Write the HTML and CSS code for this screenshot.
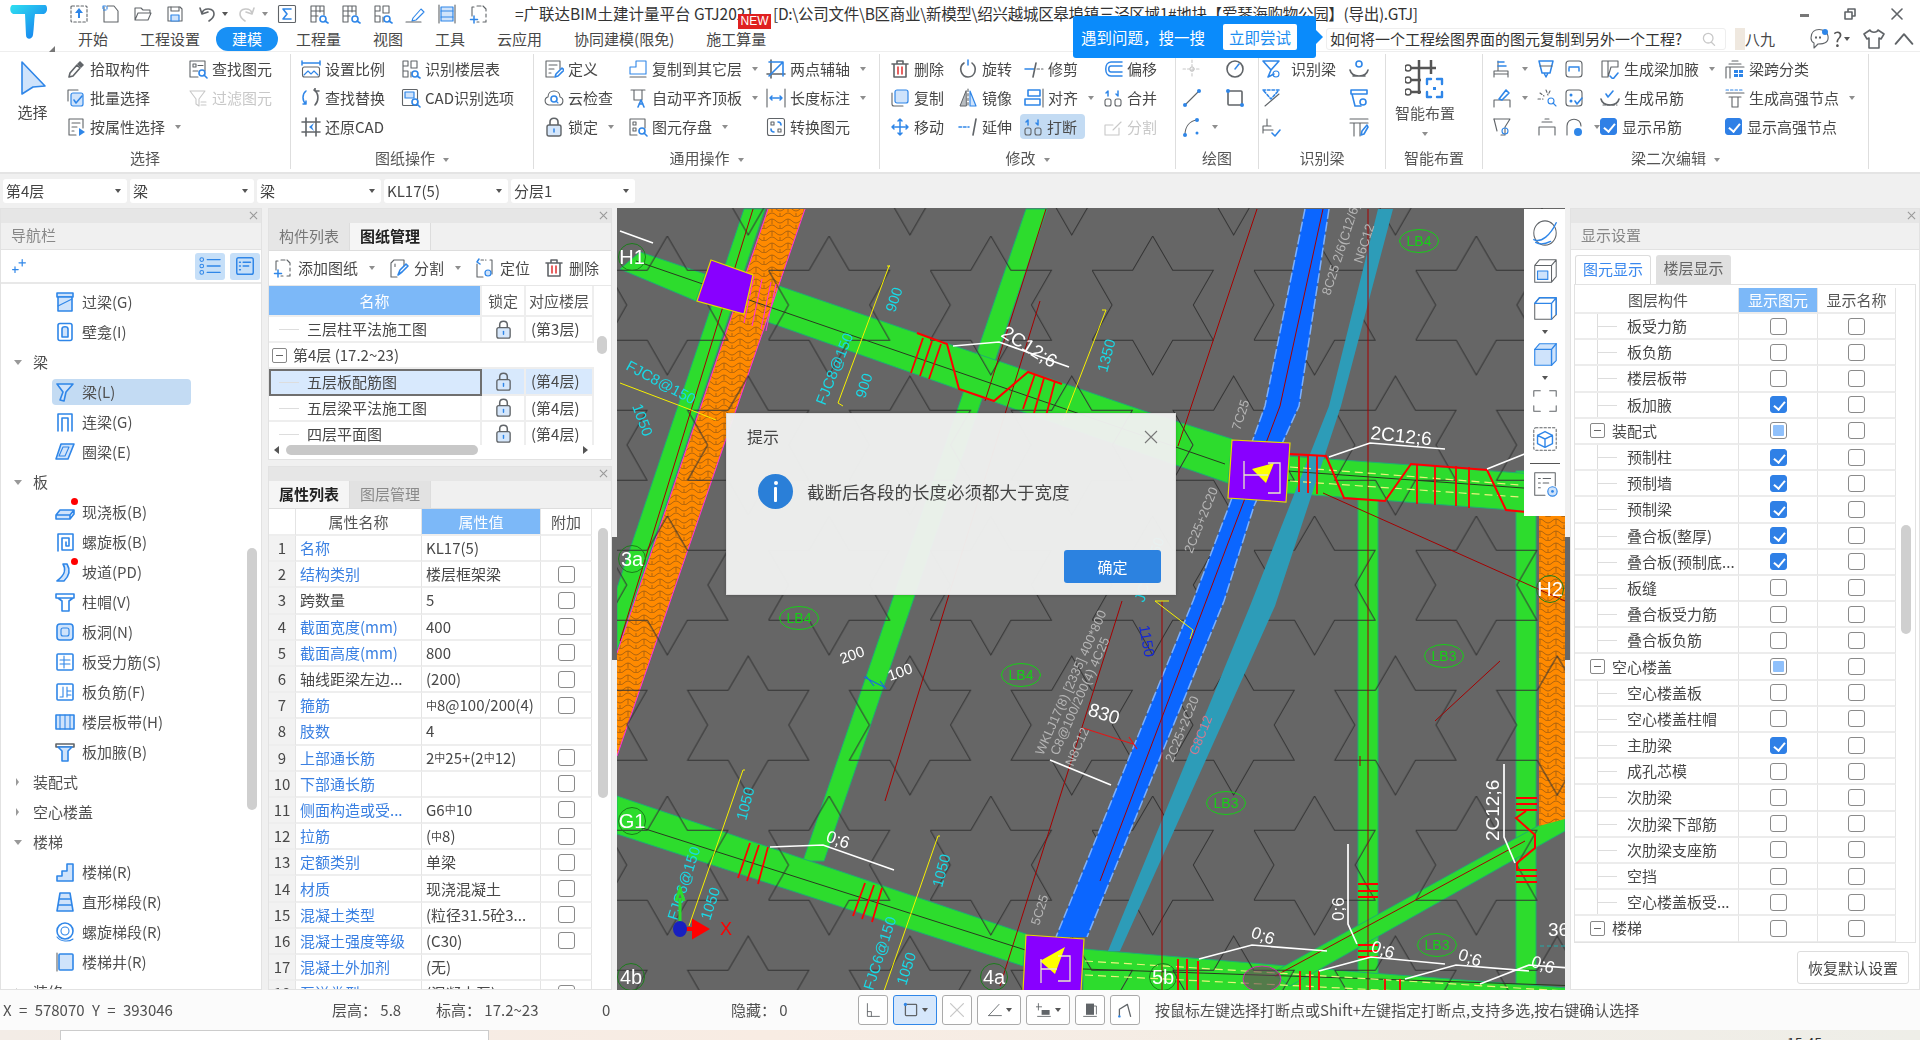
FILE: index.html
```html
<!DOCTYPE html>
<html lang="zh-CN">
<head>
<meta charset="utf-8">
<title>广联达BIM土建计量平台</title>
<link rel="stylesheet" href="styles.css">
</head>
<body>
<svg class="defs" width="0" height="0" aria-hidden="true">
<defs>
<linearGradient id="logoGrad" x1="0" y1="0" x2="1" y2="1"><stop offset="0" stop-color="#2fe0f0"/><stop offset="1" stop-color="#1273f0"/></linearGradient>
<symbol id="i-upload" viewBox="0 0 20 20"><rect class="g dash" x="2" y="2" width="16" height="16" rx="1"/><path class="bf" d="M10 4l4 5h-3v5H9V9H6z"/></symbol>
<symbol id="i-new" viewBox="0 0 20 20"><path class="g" d="M3 3v15h14V7l-4-5H6"/><path class="b dash" d="M2 2h4v4H2z"/></symbol>
<symbol id="i-open" viewBox="0 0 20 20"><path class="g" d="M2 16V4h6l2 2h7v3M2 16l3-7h13l-3 7z"/></symbol>
<symbol id="i-save" viewBox="0 0 20 20"><path class="g" d="M3 3h12l2 2v12H3z"/><path class="g" d="M6 3v4h8V3"/><rect class="lb" x="6" y="11" width="8" height="6"/></symbol>
<symbol id="i-undo" viewBox="0 0 20 20"><path class="g w2" d="M5 9c2-6 12-5 12 1 0 3-2 5-5 7M3 4l2 6 6-2"/></symbol>
<symbol id="i-redo" viewBox="0 0 20 20"><path class="d w2" d="M15 9C13 3 3 4 3 10c0 3 2 5 5 7M17 4l-2 6-6-2"/></symbol>
<symbol id="i-sum" viewBox="0 0 20 20"><rect class="g" x="1.5" y="1.5" width="17" height="17" rx="1"/><path class="b w2" d="M14 5H6l4 5-4 5h8"/></symbol>
<symbol id="i-gridlens" viewBox="0 0 20 20"><path class="g" d="M2 18V2h13v9M2 7h13M2 12h7M7 2v16H2M11 2v6"/><circle class="b w2" cx="14" cy="15" r="3"/><path class="b w2" d="M16 17l3 2"/></symbol>
<symbol id="i-lineslens" viewBox="0 0 20 20"><path class="g" d="M2 18V2h5v5H2M2 12h5v6H2M10 2h6v7h-6zM10 13v5"/><circle class="b w2" cx="14" cy="15" r="3"/><path class="b w2" d="M16 17l3 2"/></symbol>
<symbol id="i-pen" viewBox="0 0 20 20"><path class="b" d="M8 14l8-9 3 3-8 8-4 1z"/><path class="g" d="M1 18h15"/></symbol>
<symbol id="i-cols" viewBox="0 0 20 20"><path class="g" d="M2 1v18M18 1v18"/><rect class="lb" x="4" y="3" width="12" height="14"/><path class="b" d="M4 7h12M4 13h12"/></symbol>
<symbol id="i-addpage" viewBox="0 0 20 20"><path class="g" d="M3 12V3h2M8 2h4M14 2l3 3v2M17 10v3M17 16v2h-3M10 18H8"/><path class="bw" d="M5 12v7M1.500 15.500h7"/></symbol>
<symbol id="i-pick" viewBox="0 0 20 20"><path class="g w2" d="M3 18l1-4 7-8 3 3-7 8z"/><path class="gf" d="M11 5l3-3 4 4-3 3z"/></symbol>
<symbol id="i-batch" viewBox="0 0 20 20"><path class="g" d="M2 13V2h10"/><rect class="lb" x="5" y="5" width="12" height="13" rx="2"/><path class="b w2" d="M8 12l2 3 6-7"/></symbol>
<symbol id="i-attr" viewBox="0 0 20 20"><path class="g" d="M10 18H3V2h14v9M6 6h8M6 10h5M6 14h2"/><path class="bf" d="M13 11l6 4-6 4z"/></symbol>
<symbol id="i-find" viewBox="0 0 20 20"><path class="g" d="M10 18H2V2h15v10"/><rect class="g" x="5" y="5" width="3" height="3"/><path class="g" d="M10 6.500h5M5 12h5"/><circle class="b w2" cx="14" cy="14" r="3"/><path class="b w2" d="M16 16l3 3"/></symbol>
<symbol id="i-filter" viewBox="0 0 20 20"><path class="d" d="M2 3h15l-6 8v7l-3-2v-5z"/><path class="d" d="M13 14h5M13 17h5"/></symbol>
<symbol id="i-scale" viewBox="0 0 20 20"><path class="bw" d="M1 2v4M19 2v4M1 4h18"/><rect class="g" x="1.500" y="8" width="17" height="10" rx="2"/><path class="b" d="M3 16l4-4 3 3 3-3 4 4"/></symbol>
<symbol id="i-replace" viewBox="0 0 20 20"><path class="bw" d="M5 3C1 6 1 13 5 16M5 16v-3M5 16H2"/><path class="g w2" d="M13 2c5 3 5 11 1 15M14 3h4M14 3V0"/></symbol>
<symbol id="i-restore" viewBox="0 0 20 20"><path class="g w2" d="M1 5h18M1 15h18M5 1v18M15 1v18"/><path class="bf" d="M13 6l-5 4 5 4-2-4z"/></symbol>
<symbol id="i-cad" viewBox="0 0 20 20"><rect class="g" x="1.500" y="1.500" width="15" height="16" rx="1"/><rect class="lb" x="4" y="4" width="9" height="6"/><circle class="b w2" cx="14" cy="14" r="3"/><path class="b w2" d="M16 16l3 3"/></symbol>
<symbol id="i-define" viewBox="0 0 20 20"><path class="g" d="M10 18H2V2h14v8M5 6h8M5 10h5M5 14h2"/><path class="b w2" d="M11 18l1-3 6-6 2 2-6 6z"/></symbol>
<symbol id="i-cloud" viewBox="0 0 20 20"><path class="g" d="M5 17C0 16 0 10 4 9c0-8 12-8 12 0 4 1 4 8-1 8z"/><circle class="b w2" cx="10" cy="11" r="3"/><path class="b" d="M12 13l2 2"/></symbol>
<symbol id="i-lock" viewBox="0 0 20 20"><path class="g w2" d="M6 8V5c0-5 8-5 8 0v3"/><rect class="lk" x="3" y="8" width="14" height="11" rx="2"/><path class="bw" d="M10 12v3"/></symbol>
<symbol id="i-copyto" viewBox="0 0 20 20"><path class="b" d="M2 8h6V2h10v13H2z"/><path class="g" d="M2 18h16"/></symbol>
<symbol id="i-autoalign" viewBox="0 0 20 20"><path class="g" d="M3 2h14M6 2v10h8V2"/><path class="b w2" d="M10 19l3-7 3 7M11 16h4"/></symbol>
<symbol id="i-store" viewBox="0 0 20 20"><path class="g" d="M9 18H2V2h15v9"/><rect class="g" x="5" y="5" width="3" height="3"/><rect class="g" x="5" y="11" width="3" height="3"/><circle class="b w2" cx="14" cy="14" r="3"/><path class="b w2" d="M16 16l3 3"/></symbol>
<symbol id="i-axis" viewBox="0 0 20 20"><path class="g w2" d="M5 1v18M1 15h18"/><path class="b w2" d="M3 17L17 3M3 3h14v14"/></symbol>
<symbol id="i-dim" viewBox="0 0 20 20"><path class="g" d="M1 1v18M19 1v18"/><path class="bw" d="M4 10h12M6 8l-2 2 2 2M14 8l2 2-2 2"/></symbol>
<symbol id="i-convert" viewBox="0 0 20 20"><rect class="g" x="1.500" y="1.500" width="17" height="17" rx="2"/><path class="g" d="M5 5h3v3H5zM12 12h3v3h-3z"/><path class="b w2" d="M12 5c3 0 3 3 3 3M8 15c-3 0-3-3-3-3"/></symbol>
<symbol id="i-del" viewBox="0 0 20 20"><path class="g w2" d="M4 5v13h12V5M2 5h16M7 5V2h6v3"/><path class="rw" d="M8 8v7M12 8v7"/></symbol>
<symbol id="i-rotate" viewBox="0 0 20 20"><path class="g w2" d="M6 4C0 8 3 18 10 18s10-9 4-14"/><path class="bw" d="M10 1v5"/></symbol>
<symbol id="i-trim" viewBox="0 0 20 20"><path class="bw" d="M1 10h9"/><path class="g w2" d="M12 4l-3 14"/><path class="g dash" d="M13 10h6"/></symbol>
<symbol id="i-offset" viewBox="0 0 20 20"><path class="bw" d="M19 3H8C1 3 1 17 8 17h11M19 7H8c-3 0-3 6 0 6h11"/></symbol>
<symbol id="i-copy" viewBox="0 0 20 20"><path class="g" d="M2 5v11c0 1 1 2 2 2h9"/><rect class="lb" x="5" y="2" width="13" height="13" rx="2"/></symbol>
<symbol id="i-mirror" viewBox="0 0 20 20"><path class="gf2" d="M8 3L2 18h6z"/><path class="lb" d="M12 3l6 15h-6z"/><path class="g dash" d="M10 1v18"/></symbol>
<symbol id="i-align" viewBox="0 0 20 20"><rect class="b w2" x="4" y="2" width="12" height="6"/><rect class="b w2" x="1" y="11" width="15" height="6"/><path class="g" d="M19 1v18"/></symbol>
<symbol id="i-merge" viewBox="0 0 20 20"><rect class="g" x="2" y="11" width="6" height="7" rx="2"/><rect class="g" x="12" y="11" width="6" height="7" rx="2"/><path class="bw" d="M5 3v5M3 5l2-2M15 3v5M13 6l2 2"/></symbol>
<symbol id="i-move" viewBox="0 0 20 20"><path class="bw" d="M10 2v16M2 10h16M8 4l2-2 2 2M8 16l2 2 2-2M4 8l-2 2 2 2M16 8l2 2-2 2"/></symbol>
<symbol id="i-extend" viewBox="0 0 20 20"><path class="b dash w2" d="M1 10h10"/><path class="g w2" d="M18 2l-3 16"/></symbol>
<symbol id="i-split" viewBox="0 0 20 20"><path class="d" d="M2 8h8M2 8v10h14v-7"/><path class="d" d="M10 13l8-8"/></symbol>
<symbol id="i-point" viewBox="0 0 20 20"><path class="d dash" d="M10 1v18M1 10h18"/><circle class="d" cx="10" cy="10" r="2"/></symbol>
<symbol id="i-clock" viewBox="0 0 20 20"><circle class="g w2" cx="10" cy="10" r="8"/><path class="bw" d="M10 10l4-5"/></symbol>
<symbol id="i-line" viewBox="0 0 20 20"><path class="g" d="M4 16L16 4"/><circle class="bf" cx="3" cy="17" r="2"/><circle class="bf" cx="17" cy="3" r="2"/></symbol>
<symbol id="i-rect" viewBox="0 0 20 20"><rect class="g w2" x="3" y="3" width="14" height="14" rx="1"/><circle class="bf" cx="3" cy="3" r="2"/><circle class="bf" cx="17" cy="17" r="2"/></symbol>
<symbol id="i-arc" viewBox="0 0 20 20"><path class="g" d="M3 18C3 9 8 4 15 3"/><circle class="bf" cx="3" cy="18" r="2"/><circle class="bf" cx="15" cy="3" r="2"/><circle class="bf" cx="15" cy="16" r="1.500"/></symbol>
<symbol id="i-recog" viewBox="0 0 20 20"><path class="b w2" d="M2 2h16l-8 9zM10 11l-3 7 6-3"/><circle class="b" cx="15" cy="15" r="3"/></symbol>
<symbol id="i-recog2" viewBox="0 0 20 20"><path class="b dash w2" d="M2 2h16l-8 9z"/><path class="g" d="M4 18L18 6"/></symbol>
<symbol id="i-recog3" viewBox="0 0 20 20"><path class="g" d="M2 16V9h8M2 13h10M6 2v7"/><path class="b w2" d="M11 16l3 3 5-6"/></symbol>
<symbol id="i-hang" viewBox="0 0 20 20"><circle class="b w2" cx="10" cy="5" r="3"/><path class="g w2" d="M1 11c2 8 16 8 18 0M4 17h12"/></symbol>
<symbol id="i-beamfind" viewBox="0 0 20 20"><path class="b w2" d="M2 2h16v4H2zM3 6l3 12h6"/><circle class="b w2" cx="14" cy="14" r="3"/></symbol>
<symbol id="i-tpen" viewBox="0 0 20 20"><path class="g" d="M1 2h18M1 6h18M5 6v13M11 6v13"/><path class="b w2" d="M12 18l1-4 5-6 1 2-4 7z"/></symbol>
<symbol id="i-beam1" viewBox="0 0 20 20"><path class="g" d="M2 18v-6h14v6M2 15h14M6 12V2"/><path class="bw" d="M6 3h6M6 7h8"/></symbol>
<symbol id="i-beam2" viewBox="0 0 20 20"><path class="bw" d="M2 2h14l-3 12H5zM7 14l2 4 2-4"/><path class="g" d="M3 7h12"/></symbol>
<symbol id="i-beam3" viewBox="0 0 20 20"><rect class="g" x="2" y="2" width="16" height="16" rx="3"/><path class="bw" d="M5 8h10M5 12V9M15 12V9"/></symbol>
<symbol id="i-beam4" viewBox="0 0 20 20"><path class="g" d="M2 19v-7h16v7"/><path class="b w2" d="M7 11l7-9 3 3-7 7z"/></symbol>
<symbol id="i-beam5" viewBox="0 0 20 20"><path class="g dash" d="M9 2l2 5M3 5l4 3M1 11h5M13 3l-2 4"/><circle class="b" cx="14" cy="13" r="3"/><path class="b" d="M16 15l3 3"/></symbol>
<symbol id="i-beam6" viewBox="0 0 20 20"><rect class="g" x="2" y="2" width="16" height="16" rx="3"/><circle class="bf" cx="7" cy="7" r="1.500"/><circle class="bf" cx="7" cy="13" r="1.500"/><path class="b w2" d="M11 13l2 3 5-6"/></symbol>
<symbol id="i-beam7" viewBox="0 0 20 20"><path class="g" d="M2 2h16l-5 8v8H9"/><circle class="b" cx="13" cy="14" r="3"/><path class="g" d="M2 2l3 12"/></symbol>
<symbol id="i-beam8" viewBox="0 0 20 20"><path class="g" d="M2 18v-8h16v8M5 5h10M8 2h4"/></symbol>
<symbol id="i-beam9" viewBox="0 0 20 20"><path class="g" d="M3 18V9c0-9 14-9 14 0"/><circle class="bf" cx="14" cy="15" r="4"/></symbol>
<symbol id="i-haunch" viewBox="0 0 20 20"><path class="g" d="M2 2h16v6H11l-3 10H2zM8 2v16"/><path class="b w2" d="M10 17l3 3 5-6"/></symbol>
<symbol id="i-genhang" viewBox="0 0 20 20"><path class="b w2" d="M6 6l2 3 5-6"/><path class="g w2" d="M1 11c2 8 16 8 18 0"/><path class="g dash" d="M3 17h14"/></symbol>
<symbol id="i-spanclass" viewBox="0 0 20 20"><path class="g" d="M1 19V8h18M4 5h12M7 2h6M5 8v11"/><rect class="bf" x="9" y="11" width="4" height="3"/><rect class="bf" x="14" y="11" width="4" height="3"/><rect class="bf" x="9" y="15" width="4" height="3"/><rect class="bf" x="14" y="15" width="4" height="3"/></symbol>
<symbol id="i-highnode" viewBox="0 0 20 20"><path class="g" d="M1 5h18M4 9h12M7 9v10h6V9"/><path class="b dash" d="M1 2h18"/></symbol>
<symbol id="i-chat" viewBox="0 0 24 24"><path class="g" d="M4 11c0-12 16-10 17-2 1 6-3 8-10 8l-4 4v-5c-2-1-3-3-3-5z"/><circle class="bf" cx="18" cy="5" r="3"/><path class="gf" d="M8 9.500h2v2H8zM12 9.500h2v2h-2z"/></symbol>
<symbol id="i-shirt" viewBox="0 0 24 24"><path class="g w2" d="M8 3L2 7l3 5 2-1v10h10V11l2 1 3-5-6-4c-1 3-7 3-8 0z"/></symbol>
<symbol id="i-lens" viewBox="0 0 20 20"><circle class="d w2" cx="9" cy="9" r="6"/><path class="d w2" d="M13 14l4 4"/></symbol>
<symbol id="i-nlist" viewBox="0 0 24 24"><path class="bw" d="M9 5h14M9 12h14M9 19h14"/><circle class="b" cx="3" cy="5" r="2"/><circle class="b" cx="3" cy="12" r="2"/><circle class="b" cx="3" cy="19" r="2"/></symbol>
<symbol id="i-ncard" viewBox="0 0 24 24"><rect class="b w2" x="3" y="3" width="18" height="18" rx="2"/><path class="b w2" d="M6 8h1M10 8h8M6 12h1M10 12h6M6 16h1"/></symbol>
<symbol id="i-sparkle" viewBox="0 0 20 20"><path class="bw" d="M14 2v8M10 6h8M5 11v7M2 14.500h7"/></symbol>
<symbol id="i-split2" viewBox="0 0 20 20"><path class="g" d="M8 19H2V5l3-3h10v6"/><path class="g dash" d="M6 6v4"/><path class="b w2" d="M9 17l2-5 6-6 2 2-6 6z"/></symbol>
<symbol id="i-locate" viewBox="0 0 20 20"><path class="g" d="M2 6v13h6M15 2h2v14"/><path class="g dash" d="M6 2h5"/><circle class="lb" cx="13" cy="15" r="3"/><path class="bw" d="M4 1l-2 3 3 2"/></symbol>
<symbol id="n-lintel" viewBox="0 0 20 20"><rect class="lbw" x="2" y="1" width="16" height="4"/><path class="lbw" d="M3 5v14h14V5z"/><path class="b" d="M3 14l14-7"/></symbol>
<symbol id="n-niche" viewBox="0 0 20 20"><rect class="b w2" x="3" y="1.500" width="14" height="17" rx="2"/><path class="lbw" d="M7 15V7c0-3 6-3 6 0v8z"/></symbol>
<symbol id="n-beam" viewBox="0 0 20 20"><path class="lbw" d="M2 2h16l-7 8-2 9-4-1 3-8z"/></symbol>
<symbol id="n-link" viewBox="0 0 20 20"><path class="b w2" d="M3 19V2h14v17M7 19V6h6v13"/></symbol>
<symbol id="n-ring" viewBox="0 0 20 20"><path class="lbw" d="M6 2h13l-6 15H1z"/><path class="b" d="M8 5h6l-4 9H4z"/></symbol>
<symbol id="n-slab" viewBox="0 0 20 20"><path class="lbw" d="M1 13l4-5h14l-4 5zM1 13v4h14v-4M19 8v4l-4 5"/></symbol>
<symbol id="n-spiral" viewBox="0 0 20 20"><path class="b w2" d="M3 19V2h15v16H7V6h7v8h-3v-4"/></symbol>
<symbol id="n-ramp" viewBox="0 0 20 20"><path class="lbw" d="M8 2c3 5 3 10-6 17h7c6-6 6-12 3-17z"/></symbol>
<symbol id="n-cap" viewBox="0 0 20 20"><path class="b w2" d="M1 2h18v4H1zM3 6l4 3v10h7V9l4-3"/></symbol>
<symbol id="n-hole" viewBox="0 0 20 20"><rect class="lbw" x="2" y="2" width="16" height="16" rx="3"/><rect class="b" x="6" y="6" width="8" height="8" rx="2"/></symbol>
<symbol id="n-rebar" viewBox="0 0 20 20"><rect class="b w2" x="2" y="2" width="16" height="16" rx="1"/><path class="b" d="M9 4v12M5 8h10M5 12h10"/></symbol>
<symbol id="n-rebar2" viewBox="0 0 20 20"><rect class="b w2" x="2" y="2" width="16" height="16" rx="1"/><path class="b" d="M8 5v10h-3M12 5v10M12 9h4M12 13h4"/></symbol>
<symbol id="n-band" viewBox="0 0 20 20"><rect class="lbw" x="1" y="3" width="18" height="14"/><path class="b" d="M5 3v14M10 3v14M15 3v14"/></symbol>
<symbol id="n-haunch" viewBox="0 0 20 20"><path class="g w2" d="M1 2h18v3H1z"/><path class="lbw" d="M3 5l4 4v10h6V9l4-4z"/></symbol>
<symbol id="n-stair" viewBox="0 0 20 20"><path class="lbw" d="M2 19v-5h5V9h5V2h6v17z"/></symbol>
<symbol id="n-flight" viewBox="0 0 20 20"><path class="lbw" d="M5 1h10l3 18H2zM4 7h12M3 13h14"/></symbol>
<symbol id="n-spstair" viewBox="0 0 20 20"><circle class="b w2" cx="10" cy="9" r="8"/><circle class="b" cx="10" cy="9" r="4"/><path class="b" d="M2 15c4 5 12 5 16 2"/></symbol>
<symbol id="n-well" viewBox="0 0 20 20"><path class="g" d="M2 1v18"/><rect class="lbw" x="4" y="2" width="14" height="16" rx="1"/></symbol>
<pattern id="hatch" patternUnits="userSpaceOnUse" width="16" height="12"><rect class="orange-fill" width="16" height="12"/><path class="hatch-line" d="M0 4q4-4 8 0t8 0M0 10q4-4 8 0t8 0M4 2v5M12 8v4"/></pattern>
<pattern id="stars" patternUnits="userSpaceOnUse" x="606.700" y="235" width="161.800" height="280"><path class="star" d="M60.600 0l20 34.300h40.600l-20 34.700 20 35.300H80.600L60.600 139l-20-34.700H0L20 69 0 34.300h40.600z"/><path class="star" d="M141.500 140l20 34.300h40.600l-20 34.700 20 35.300h-40.600l-20 34.700-20-34.700H80.900l20-35.300-20-34.700h40.600zM-20.300 140l20 34.300H40.300l-20 34.700 20 35.300H-.3l-20 34.700-20-34.700H-81l20-35.300-20-34.700h40.700z"/></pattern>
</defs>
</svg>

<header class="top">
  <div class="logo-cell">
    <svg class="logo" viewBox="0 0 38 36"><path class="logo-t" d="M2 1h33c3 0 3 9-2 9h-8c-1 6-1 14-2 21-1 5-7 5-7 0l-1-21H4C0 10-1 3 2 1z"/></svg>
    <span class="logo-corner"></span>
  </div>
  <div class="top-main">
    <div class="title-row">
      <div class="quick">
        <svg class="ic"><use href="#i-upload"/></svg>
        <svg class="ic"><use href="#i-new"/></svg>
        <svg class="ic"><use href="#i-open"/></svg>
        <svg class="ic"><use href="#i-save"/></svg>
        <span class="quick-pair"><svg class="ic"><use href="#i-undo"/></svg><i class="caret dark"></i></span>
        <span class="quick-pair"><svg class="ic"><use href="#i-redo"/></svg><i class="caret"></i></span>
        <svg class="ic"><use href="#i-sum"/></svg>
        <svg class="ic"><use href="#i-gridlens"/></svg>
        <svg class="ic"><use href="#i-gridlens"/></svg>
        <svg class="ic"><use href="#i-lineslens"/></svg>
        <svg class="ic"><use href="#i-pen"/></svg>
        <svg class="ic"><use href="#i-cols"/></svg>
        <svg class="ic"><use href="#i-addpage"/></svg>
      </div>
      <div class="app-title">=广联达BIM土建计量平台 GTJ2021<span class="new-badge">NEW</span><span class="app-path">[D:\公司文件\B区商业\新模型\绍兴越城区皋埠镇三泾区域1#地块【爱琴海购物公园】(导出).GTJ]</span></div>
      <div class="win-ctrl">
        <span class="win-min"></span>
        <svg class="win-ic" viewBox="0 0 12 12"><path class="g w2" d="M1 4h7v7H1zM4 4V1h7v7H8"/></svg>
        <svg class="win-ic" viewBox="0 0 12 12"><path class="g w2" d="M1 1l10 10M11 1L1 11"/></svg>
      </div>
    </div>
    <div class="tab-row">
      <nav class="tabs">
        <span>开始</span><span>工程设置</span><span class="tab-active">建模</span><span>工程量</span><span>视图</span><span>工具</span><span>云应用</span><span>协同建模(限免)</span><span>施工算量</span>
      </nav>
      <div class="search-zone">
        <div class="search-box"><span>如何将一个工程绘图界面的图元复制到另外一个工程?</span><svg class="ic-s"><use href="#i-lens"/></svg></div>
        <span class="avatar"></span><span class="user">八九</span>
        <svg class="ic-m"><use href="#i-chat"/></svg>
        <span class="help">?<i class="caret dark"></i></span>
        <svg class="ic-m"><use href="#i-shirt"/></svg>
        <svg class="ic-m chevron" viewBox="0 0 20 20"><path class="g w2" d="M3 14l7-8 7 8"/></svg>
      </div>
    </div>
  </div>
  <div class="tip-bubble"><span>遇到问题，搜一搜</span><span class="tip-btn">立即尝试</span></div>
</header>

<section class="ribbon">
  <div class="group g-sel">
    <div class="body">
      <div class="big-btn big-sel"><svg class="ic-big" viewBox="0 0 30 36"><path class="lbw" d="M4 2l23 24-12 1-11 7z"/></svg><span>选择</span></div>
      <div class="col"><div class="item"><svg class="ic"><use href="#i-pick"/></svg>拾取构件</div><div class="item"><svg class="ic"><use href="#i-batch"/></svg>批量选择</div><div class="item"><svg class="ic"><use href="#i-attr"/></svg>按属性选择<i class="caret"></i></div></div>
      <div class="col"><div class="item"><svg class="ic"><use href="#i-find"/></svg>查找图元</div><div class="item off"><svg class="ic"><use href="#i-filter"/></svg>过滤图元</div></div>
    </div>
    <div class="glabel">选择</div>
  </div>
  <div class="group g-dwg">
    <div class="body">
      <div class="col"><div class="item"><svg class="ic"><use href="#i-scale"/></svg>设置比例</div><div class="item"><svg class="ic"><use href="#i-replace"/></svg>查找替换</div><div class="item"><svg class="ic"><use href="#i-restore"/></svg>还原CAD</div></div>
      <div class="col"><div class="item"><svg class="ic"><use href="#i-lineslens"/></svg>识别楼层表</div><div class="item"><svg class="ic"><use href="#i-cad"/></svg>CAD识别选项</div></div>
    </div>
    <div class="glabel">图纸操作<i class="caret"></i></div>
  </div>
  <div class="group g-gen">
    <div class="body">
      <div class="col"><div class="item"><svg class="ic"><use href="#i-define"/></svg>定义</div><div class="item"><svg class="ic"><use href="#i-cloud"/></svg>云检查</div><div class="item"><svg class="ic"><use href="#i-lock"/></svg>锁定<i class="caret"></i></div></div>
      <div class="col"><div class="item"><svg class="ic"><use href="#i-copyto"/></svg>复制到其它层<i class="caret"></i></div><div class="item"><svg class="ic"><use href="#i-autoalign"/></svg>自动平齐顶板<i class="caret"></i></div><div class="item"><svg class="ic"><use href="#i-store"/></svg>图元存盘<i class="caret"></i></div></div>
      <div class="col"><div class="item"><svg class="ic"><use href="#i-axis"/></svg>两点辅轴<i class="caret"></i></div><div class="item"><svg class="ic"><use href="#i-dim"/></svg>长度标注<i class="caret"></i></div><div class="item"><svg class="ic"><use href="#i-convert"/></svg>转换图元</div></div>
    </div>
    <div class="glabel">通用操作<i class="caret"></i></div>
  </div>
  <div class="group g-mod">
    <div class="body">
      <div class="col"><div class="item"><svg class="ic"><use href="#i-del"/></svg>删除</div><div class="item"><svg class="ic"><use href="#i-copy"/></svg>复制</div><div class="item"><svg class="ic"><use href="#i-move"/></svg>移动</div></div>
      <div class="col"><div class="item"><svg class="ic"><use href="#i-rotate"/></svg>旋转</div><div class="item"><svg class="ic"><use href="#i-mirror"/></svg>镜像</div><div class="item"><svg class="ic"><use href="#i-extend"/></svg>延伸</div></div>
      <div class="col"><div class="item"><svg class="ic"><use href="#i-trim"/></svg>修剪</div><div class="item"><svg class="ic"><use href="#i-align"/></svg>对齐<i class="caret"></i></div><div class="item item-on"><svg class="ic"><use href="#i-merge"/></svg>打断</div></div>
      <div class="col"><div class="item"><svg class="ic"><use href="#i-offset"/></svg>偏移</div><div class="item"><svg class="ic"><use href="#i-merge"/></svg>合并</div><div class="item off"><svg class="ic"><use href="#i-split"/></svg>分割</div></div>
    </div>
    <div class="glabel">修改<i class="caret"></i></div>
  </div>
  <div class="group g-draw">
    <div class="body">
      <div class="col"><div class="item"><svg class="ic"><use href="#i-point"/></svg></div><div class="item"><svg class="ic"><use href="#i-line"/></svg></div><div class="item"><svg class="ic"><use href="#i-arc"/></svg><i class="caret"></i></div></div>
      <div class="col"><div class="item"><svg class="ic"><use href="#i-clock"/></svg></div><div class="item"><svg class="ic"><use href="#i-rect"/></svg></div></div>
    </div>
    <div class="glabel">绘图</div>
  </div>
  <div class="group g-rec">
    <div class="body">
      <div class="col"><div class="item"><svg class="ic"><use href="#i-recog"/></svg>识别梁</div><div class="item"><svg class="ic"><use href="#i-recog2"/></svg></div><div class="item"><svg class="ic"><use href="#i-recog3"/></svg></div></div>
      <div class="col"><div class="item"><svg class="ic"><use href="#i-hang"/></svg></div><div class="item"><svg class="ic"><use href="#i-beamfind"/></svg></div><div class="item"><svg class="ic"><use href="#i-tpen"/></svg></div></div>
    </div>
    <div class="glabel">识别梁</div>
  </div>
  <div class="group g-smart">
    <div class="body">
      <div class="big-btn big-smart"><svg class="ic-smart" viewBox="0 0 40 46"><path class="smart-line" d="M14 2v34M26 2v14M1 10h30M1 22h15M1 34h15"/><circle class="smart-dot" cx="3" cy="10" r="3"/><circle class="smart-dot" cx="3" cy="22" r="3"/><circle class="smart-dot" cx="3" cy="34" r="3"/><path class="bw2" d="M22 26v-5h4M32 21h5v5M37 34v5h-5M26 39h-4v-5"/><rect class="bfr" x="28" y="29" width="3" height="3"/></svg><span>智能布置</span><i class="caret"></i></div>
    </div>
    <div class="glabel">智能布置</div>
  </div>
  <div class="group g-edit">
    <div class="body">
      <div class="col"><div class="item"><svg class="ic"><use href="#i-beam1"/></svg><i class="caret"></i></div><div class="item"><svg class="ic"><use href="#i-beam4"/></svg><i class="caret"></i></div><div class="item"><svg class="ic"><use href="#i-beam7"/></svg></div></div>
      <div class="col"><div class="item"><svg class="ic"><use href="#i-beam2"/></svg></div><div class="item"><svg class="ic"><use href="#i-beam5"/></svg></div><div class="item"><svg class="ic"><use href="#i-beam8"/></svg></div></div>
      <div class="col"><div class="item"><svg class="ic"><use href="#i-beam3"/></svg></div><div class="item"><svg class="ic"><use href="#i-beam6"/></svg></div><div class="item"><svg class="ic"><use href="#i-beam9"/></svg><i class="caret"></i></div></div>
      <div class="col"><div class="item"><svg class="ic"><use href="#i-haunch"/></svg>生成梁加腋<i class="caret"></i></div><div class="item"><svg class="ic"><use href="#i-genhang"/></svg>生成吊筋</div><div class="item"><span class="cb on big"></span>显示吊筋</div></div>
      <div class="col"><div class="item"><svg class="ic"><use href="#i-spanclass"/></svg>梁跨分类</div><div class="item"><svg class="ic"><use href="#i-highnode"/></svg>生成高强节点<i class="caret"></i></div><div class="item"><span class="cb on big"></span>显示高强节点</div></div>
    </div>
    <div class="glabel">梁二次编辑<i class="caret"></i></div>
  </div>
</section>

<section class="combos">
  <div class="combo">第4层<i class="caret dark"></i></div>
  <div class="combo">梁<i class="caret dark"></i></div>
  <div class="combo">梁<i class="caret dark"></i></div>
  <div class="combo">KL17(5)<i class="caret dark"></i></div>
  <div class="combo">分层1<i class="caret dark"></i></div>
</section>

<main class="workspace">
  <aside class="panel nav">
    <div class="closebar"><svg class="x" viewBox="0 0 10 10"><path d="M1 1l8 8M9 1l-8 8"/></svg></div>
    <div class="ptitle">导航栏</div>
    <div class="nav-tools">
      <svg class="ic-s spark"><use href="#i-sparkle"/></svg>
      <span class="nav-toggle"><svg class="ic-t"><use href="#i-nlist"/></svg></span>
      <span class="nav-toggle"><svg class="ic-t"><use href="#i-ncard"/></svg></span>
    </div>
    <div class="tree">
      <div class="node"><svg class="ic"><use href="#n-lintel"/></svg>过梁(G)</div>
      <div class="node"><svg class="ic"><use href="#n-niche"/></svg>壁龛(I)</div>
      <div class="folder"><i class="tri open"></i>梁</div>
      <div class="node sel"><svg class="ic"><use href="#n-beam"/></svg>梁(L)</div>
      <div class="node"><svg class="ic"><use href="#n-link"/></svg>连梁(G)</div>
      <div class="node"><svg class="ic"><use href="#n-ring"/></svg>圈梁(E)</div>
      <div class="folder"><i class="tri open"></i>板</div>
      <div class="node dot"><svg class="ic"><use href="#n-slab"/></svg>现浇板(B)</div>
      <div class="node"><svg class="ic"><use href="#n-spiral"/></svg>螺旋板(B)</div>
      <div class="node dot"><svg class="ic"><use href="#n-ramp"/></svg>坡道(PD)</div>
      <div class="node"><svg class="ic"><use href="#n-cap"/></svg>柱帽(V)</div>
      <div class="node"><svg class="ic"><use href="#n-hole"/></svg>板洞(N)</div>
      <div class="node"><svg class="ic"><use href="#n-rebar"/></svg>板受力筋(S)</div>
      <div class="node"><svg class="ic"><use href="#n-rebar2"/></svg>板负筋(F)</div>
      <div class="node"><svg class="ic"><use href="#n-band"/></svg>楼层板带(H)</div>
      <div class="node"><svg class="ic"><use href="#n-haunch"/></svg>板加腋(B)</div>
      <div class="folder"><i class="tri"></i>装配式</div>
      <div class="folder"><i class="tri"></i>空心楼盖</div>
      <div class="folder"><i class="tri open"></i>楼梯</div>
      <div class="node"><svg class="ic"><use href="#n-stair"/></svg>楼梯(R)</div>
      <div class="node"><svg class="ic"><use href="#n-flight"/></svg>直形梯段(R)</div>
      <div class="node"><svg class="ic"><use href="#n-spstair"/></svg>螺旋梯段(R)</div>
      <div class="node"><svg class="ic"><use href="#n-well"/></svg>楼梯井(R)</div>
      <div class="folder"><i class="tri"></i>装修</div>
      <span class="vbar nav-bar"></span>
    </div>
  </aside>

  <div class="mid">
    <section class="panel sheets">
      <div class="closebar"><svg class="x" viewBox="0 0 10 10"><path d="M1 1l8 8M9 1l-8 8"/></svg></div>
      <div class="ptabs"><span class="ptab dim">构件列表</span><span class="ptab cur">图纸管理</span></div>
      <div class="sheet-tools">
        <span><svg class="ic"><use href="#i-addpage"/></svg>添加图纸<i class="caret"></i></span>
        <span><svg class="ic"><use href="#i-split2"/></svg>分割<i class="caret"></i></span>
        <span><svg class="ic"><use href="#i-locate"/></svg>定位</span>
        <span><svg class="ic"><use href="#i-del"/></svg>删除</span>
      </div>
      <div class="sheet-grid">
        <div class="sh head hl">名称</div><div class="sh head">锁定</div><div class="sh head">对应楼层</div>
        <div class="sh name tl">三层柱平法施工图</div><div class="sh ctr"><svg class="ic-lock"><use href="#i-lock"/></svg></div><div class="sh">(第3层)</div>
        <div class="sh group-row"><span class="minus"></span>第4层 (17.2~23)</div>
        <div class="sh name tl focus">五层板配筋图</div><div class="sh ctr pick"><svg class="ic-lock"><use href="#i-lock"/></svg></div><div class="sh pick">(第4层)</div>
        <div class="sh name tl">五层梁平法施工图</div><div class="sh ctr"><svg class="ic-lock"><use href="#i-lock"/></svg></div><div class="sh">(第4层)</div>
        <div class="sh name tl">四层平面图</div><div class="sh ctr"><svg class="ic-lock"><use href="#i-lock"/></svg></div><div class="sh">(第4层)</div>
      </div>
      <span class="vbar sheet-v"></span>
      <div class="hscroll"><i class="arrow-l"></i><span class="hthumb"></span><i class="arrow-r"></i></div>
    </section>

    <section class="panel props">
      <div class="closebar"><svg class="x" viewBox="0 0 10 10"><path d="M1 1l8 8M9 1l-8 8"/></svg></div>
      <div class="ptabs"><span class="ptab cur">属性列表</span><span class="ptab dim2">图层管理</span></div>
      <div class="prop-grid">
        <div class="pc phead"></div><div class="pc phead cc">属性名称</div><div class="pc phead cc hl">属性值</div><div class="pc phead cc">附加</div>
        <div class="pc num">1</div><div class="pc lnk">名称</div><div class="pc">KL17(5)</div><div class="pc"></div>
        <div class="pc num">2</div><div class="pc lnk">结构类别</div><div class="pc">楼层框架梁</div><div class="pc cc"><span class="cb"></span></div>
        <div class="pc num">3</div><div class="pc">跨数量</div><div class="pc">5</div><div class="pc cc"><span class="cb"></span></div>
        <div class="pc num">4</div><div class="pc lnk">截面宽度(mm)</div><div class="pc">400</div><div class="pc cc"><span class="cb"></span></div>
        <div class="pc num">5</div><div class="pc lnk">截面高度(mm)</div><div class="pc">800</div><div class="pc cc"><span class="cb"></span></div>
        <div class="pc num">6</div><div class="pc">轴线距梁左边...</div><div class="pc">(200)</div><div class="pc cc"><span class="cb"></span></div>
        <div class="pc num">7</div><div class="pc lnk">箍筋</div><div class="pc clipv"><sup class="steel">中</sup>8@100/200(4)</div><div class="pc cc"><span class="cb"></span></div>
        <div class="pc num">8</div><div class="pc lnk">肢数</div><div class="pc">4</div><div class="pc"></div>
        <div class="pc num">9</div><div class="pc lnk">上部通长筋</div><div class="pc">2<sup class="steel">中</sup>25+(2<sup class="steel">中</sup>12)</div><div class="pc cc"><span class="cb"></span></div>
        <div class="pc num">10</div><div class="pc lnk">下部通长筋</div><div class="pc"></div><div class="pc cc"><span class="cb"></span></div>
        <div class="pc num">11</div><div class="pc lnk">侧面构造或受...</div><div class="pc">G6<sup class="steel">中</sup>10</div><div class="pc cc"><span class="cb"></span></div>
        <div class="pc num">12</div><div class="pc lnk">拉筋</div><div class="pc">(<sup class="steel">中</sup>8)</div><div class="pc cc"><span class="cb"></span></div>
        <div class="pc num">13</div><div class="pc lnk">定额类别</div><div class="pc">单梁</div><div class="pc cc"><span class="cb"></span></div>
        <div class="pc num">14</div><div class="pc lnk">材质</div><div class="pc">现浇混凝土</div><div class="pc cc"><span class="cb"></span></div>
        <div class="pc num">15</div><div class="pc lnk">混凝土类型</div><div class="pc">(粒径31.5砼3...</div><div class="pc cc"><span class="cb"></span></div>
        <div class="pc num">16</div><div class="pc lnk">混凝土强度等级</div><div class="pc">(C30)</div><div class="pc cc"><span class="cb"></span></div>
        <div class="pc num">17</div><div class="pc lnk">混凝土外加剂</div><div class="pc">(无)</div><div class="pc"></div>
        <div class="pc num">18</div><div class="pc lnk">泵送类型</div><div class="pc">(混凝土泵)</div><div class="pc cc"><span class="cb"></span></div>
      </div>
      <span class="vbar prop-v"></span>
    </section>
  </div>

  <div class="gutter"><span></span></div>

  <div class="canvas">
    <svg class="cad" viewBox="617 207 948 783" preserveAspectRatio="none" width="948" height="783">
      <rect class="cad-bg" x="617" y="207" width="948" height="783"/>
      <!-- green members, page coordinates -->
      <polygon class="gr" points="744,208 765,208 617,650 617,587"/>
      <polygon class="gr" points="1026,208 1047,208 824,860 803,860"/>
      <polygon class="gr" points="1358,490 1378,490 1378,985 1358,985"/>
      <polygon class="gr" points="1516,470 1536,470 1536,990 1516,990"/>
      <polygon class="gr" points="640,251 705,273 696,300 620,268"/>
      <polygon class="gr" points="750,275 1150,412 1232,438 1228,482 1020,410 745,313"/>
      <polygon class="gr" points="1287,455 1520,472 1565,476 1565,515 1525,510 1287,492"/>
      <polygon class="gr" points="617,795 1026,933 1023,965 617,833"/>
      <polygon class="gr" points="1083,948 1371,972 1580,988 1580,990 1083,990"/>
      <polygon class="gr" points="1272,972 1565,810 1565,830 1290,985"/>
      <!-- orange bands -->
      <polygon class="or" points="768,208 805,208 617,755 617,652"/>
      <polygon class="or" points="1539,515 1565,515 1565,818 1539,825"/>
      <path class="mg" d="M768 208L617 652M805 208L617 755"/>
      <!-- star pattern -->
      <rect class="star-fill" x="617" y="207" width="948" height="783"/>
      <!-- teal & blue -->
      <polygon class="teal" points="1378,208 1393,208 1341,405 1275,605 1120,950 1108,950 1250,605 1329,405"/>
      <polygon class="blue" points="1305,208 1329,208 1299,405 1254,505 1224,600 1087,936 1056,936 1193,600 1229,505 1265,405"/>
      <path class="blue-edge" d="M1305 208L1265 405 1229 505 1193 600 1056 936M1329 208L1299 405 1254 505 1224 600 1087 936"/>
      <!-- thin dark red lines -->
      <path class="dr" d="M1257 208L1178 445M1368 208V990M1122 600L1000 985M1162 600V990M1323 208L1280 405 1100 880"/>
      <path class="dr" d="M1323 492L1565 600M1040 300L885 800M1046 208L985 400M753 208L620 640"/>
      <path class="dk" d="M636 260L1225 463M1287 470L1565 490M636 825L1060 960M1083 968L1580 985"/>
      <path class="dr" d="M1360 755V765M1500 660l-65 60M1525 840l-250 135"/>
      <path class="ye-dash" d="M1290 466L1520 484M1290 480L1520 496M1085 960L1565 990M1085 974L1400 990"/>
      <!-- yellow lines -->
      <path class="ye" d="M887 265h3l-1 0L838 402l5 3M1102 309h4L1063 420M620 382l66 25 30 12M1169 600l-14 0 38 29-3 9"/>
      <path class="ye" d="M745 769h-2L689 925M940 835h-2L884 990"/>
      <!-- purple columns -->
      <polygon class="pu" points="711,259 753,274 744,313 697,300"/>
      <polygon class="pu" points="1232,439 1290,442 1286,501 1228,497"/>
      <polygon class="pu" points="1026,934 1084,938 1081,990 1023,990"/>
      <path class="ye-fill" d="M1252 468l22-6-8 20zM1040 960l25-14-10 27z"/>
      <path class="cw" d="M1244 460v28M1244 474h24M1268 462h12v30h-12M1041 958v24M1041 968h16M1058 955h12v25h-12"/>
      <!-- magenta ties next to column -->
      <path class="mg" d="M754 275l-10 47M762 278l-10 47M771 281l-10 47M776 283l-10 47"/>
      <!-- rebars -->
      <path class="rd" d="M917 332l30 11 12 45 35 12 34-29 34 12"/>
      <path class="rd2" d="M923 337l-12 35M932 340l-12 35M941 343l-12 35M1035 373l-12 35M1044 377l-10 35M1055 380l-9 35"/>
      <path class="rd" d="M1290 453l36 2 18 42 41 3 26-37 76 6 19 40 20 2"/>
      <path class="rd2" d="M1299 455v36M1308 455v37M1317 455v38M1417 463v40M1435 464v40M1456 465v40M1469 466v41"/>
      <path class="rd2" d="M750 842l-12 35M759 844l-12 36M768 846l-10 37M865 882l-12 33M874 884l-12 34M882 887l-10 34"/>
      <path class="rd2" d="M1358 883h20M1358 890h20M1358 896h20M1358 944h20M1358 950h20M1358 956h20"/>
      <path class="rd2" d="M1516 797h21M1516 803h21M1516 809h21M1516 869h21M1516 875h21M1516 881h21"/>
      <path class="rd" d="M1526 810l-10 7 19 17v13l-18 15v7"/>
      <path class="rd2" d="M1178 958v32M1187 958v32M1198 960v30M1300 970v20M1310 970v20M1319 970v20M1385 978v12M1400 978v12"/>
      <!-- dim lines -->
      <path class="rdthin" d="M1083 727l50 16M1129 736l8 12"/>
      <path class="blue-thin" d="M866 675l8 10M880 680l6 8M864 676l20 10"/>
      <path class="cy-dash" d="M1540 945h25"/>
      <!-- white leaders -->
      <path class="wh" d="M620 230l33 12M953 345l46-4 70 25M1329 456l41-14 75 6M1487 468l40-16M770 846l53-2 71 25M1050 759l61 25M1199 958l53-14 75 6M1319 970l52-14 74 7M1405 978l51-14 73 6M1480 983l49-19 40 3M1348 843v80l9 20M1504 763v73l11 26"/>
      <!-- axis circles -->
      <circle class="ax" cx="632" cy="256" r="13.500"/><circle class="ax" cx="632" cy="558" r="13.500"/><circle class="ax" cx="632" cy="820" r="13.500"/><circle class="ax" cx="631" cy="976" r="13.500"/><circle class="ax" cx="994" cy="976" r="13.500"/><circle class="ax" cx="1163" cy="976" r="13.500"/><circle class="ax" cx="1550" cy="588" r="13.500"/>
      <ellipse class="lbc" cx="1419" cy="240" rx="19.500" ry="11.500"/><ellipse class="lbc" cx="799" cy="617" rx="19.500" ry="11.500"/><ellipse class="lbc" cx="1021" cy="674" rx="19.500" ry="11.500"/><ellipse class="lbc" cx="1226" cy="802" rx="19.500" ry="11.500"/><ellipse class="lbc" cx="1444" cy="655" rx="19.500" ry="11.500"/><ellipse class="lbc" cx="1437" cy="944" rx="19.500" ry="11.500"/>
      <ellipse class="mgc" cx="1262" cy="978" rx="19" ry="13"/>
      <!-- labels -->
      <text class="t-ax" x="632" y="263">H1</text><text class="t-ax" x="632" y="565">3a</text><text class="t-ax" x="632" y="827">G1</text><text class="t-ax" x="631" y="983">4b</text><text class="t-ax" x="994" y="983">4a</text><text class="t-ax" x="1163" y="983">5b</text><text class="t-ax" x="1550" y="595">H2</text>
      <text class="t-lb" x="1419" y="245">LB4</text><text class="t-lb" x="799" y="622">LB4</text><text class="t-lb" x="1021" y="679">LB4</text><text class="t-lb" x="1226" y="807">LB3</text><text class="t-lb" x="1444" y="660">LB3</text><text class="t-lb" x="1437" y="949">LB3</text>
      <g class="t-cy">
        <text transform="translate(895 312) rotate(-72)">900</text>
        <text transform="translate(865 398) rotate(-72)">900</text>
        <text transform="translate(1107 372) rotate(-75)">1350</text>
        <text transform="translate(625 368) rotate(28)">FJC8@150</text>
        <text transform="translate(632 405) rotate(70)">1050</text>
        <text transform="translate(825 405) rotate(-68)">FJC8@150</text>
        <text transform="translate(746 820) rotate(-75)">1050</text>
        <text transform="translate(677 920) rotate(-72)">FJC6@150</text>
        <text transform="translate(710 920) rotate(-72)">1050</text>
        <text transform="translate(942 887) rotate(-75)">1050</text>
        <text transform="translate(873 990) rotate(-72)">FJC6@150</text>
        <text transform="translate(906 985) rotate(-72)">1050</text>
        <text transform="translate(1144 602) rotate(-72)">JC6@150</text>
      </g>
      <text class="t-blue" transform="translate(1139 625) rotate(80)">1150</text>
      <g class="t-gr">
        <text transform="translate(1330 295) rotate(-72)">8C25 2/6(C12/6)</text>
        <text transform="translate(1362 263) rotate(-72)">N6C12</text>
        <text transform="translate(1240 430) rotate(-72)">7C25</text>
        <text transform="translate(1192 553) rotate(-68)">2C25+2C20</text>
        <text transform="translate(1043 755) rotate(-66)">WKLJ17(8) [2335] 400*800</text>
        <text transform="translate(1058 755) rotate(-66)">C8@100/200(4) 4C25</text>
        <text transform="translate(1073 766) rotate(-66)">N8C12</text>
        <text transform="translate(1173 762) rotate(-68)">2C25+2C20</text>
        <text transform="translate(1039 925) rotate(-72)">5C25</text>
      </g>
      <text class="t-gr t-rose" transform="translate(1197 755) rotate(-68)">G8C12</text>
      <g class="t-wh">
        <text transform="translate(1000 335) rotate(32)">2C12;6</text>
        <text transform="translate(1370 438) rotate(6)">2C12;6</text>
        <text class="t-sm" transform="translate(842 663) rotate(-20)">200</text>
        <text class="t-sm" transform="translate(890 680) rotate(-20)">100</text>
        <text transform="translate(1087 714) rotate(18)">830</text>
        <text class="t-md" transform="translate(825 840) rotate(20)">0;6</text>
        <text class="t-md" transform="translate(1250 936) rotate(20)">0;6</text>
        <text class="t-md" transform="translate(1370 950) rotate(20)">0;6</text>
        <text class="t-md" transform="translate(1457 958) rotate(20)">0;6</text>
        <text class="t-md" transform="translate(1530 965) rotate(20)">0;6</text>
        <text class="t-md" transform="translate(1344 920) rotate(-90)">0;6</text>
        <text transform="translate(1499 840) rotate(-90)">2C12;6</text>
        <text x="1548" y="935">36</text>
      </g>
      <!-- UCS -->
      <path class="ucs-g" d="M680 925v-28M676 900l4-12 4 12"/>
      <path class="ucs-r" d="M680 928h18M694 921l12 7-12 7z"/>
      <ellipse class="ucs-b" cx="680" cy="928" rx="7" ry="8"/>
      <text class="t-x" x="720" y="934">X</text>
    </svg>

    <div class="side-tools">
      <svg class="st" viewBox="0 0 30 30"><ellipse class="g" cx="15" cy="15" rx="12" ry="13"/><path class="bw" d="M3 22c8 4 18-5 24-18M5 25c5 3 10 2 16-1"/></svg>
      <svg class="st" viewBox="0 0 30 30"><path class="g" d="M4 9l5-6h18v18l-5 6H4zM4 9h18v18M22 9l5-6"/><rect class="lb" x="7" y="15" width="11" height="9"/></svg>
      <svg class="st" viewBox="0 0 30 30"><path class="g" d="M4 9v17h18l5-5V3H9z"/><path class="bw" d="M4 9l5-6h18l-5 6H4M22 9v17M22 9l5-6v18"/></svg>
      <i class="caret dark side-caret"></i>
      <svg class="st" viewBox="0 0 30 30"><path class="lb w2" d="M4 9v17h18l5-5V3H9z"/><path class="bw" d="M4 9h18v17M22 9l5-6"/></svg>
      <i class="caret dark side-caret"></i>
      <svg class="st" viewBox="0 0 30 30"><path class="g" d="M3 10V4h7M20 4h7v6M27 20v6h-7M10 26H3v-6"/></svg>
      <svg class="st" viewBox="0 0 30 30"><rect class="g dash" x="3" y="3" width="24" height="24" rx="2"/><path class="bw" d="M15 7l8 4v9l-8 4-8-4v-9zM7 11l8 4 8-4M15 15v9"/></svg>
      <span class="side-sep"></span>
      <svg class="st" viewBox="0 0 30 30"><path class="g" d="M15 27H4V3h22v14M8 9h2M13 9h8M8 14h2M13 14h6M8 19h2"/><circle class="lb" cx="23" cy="23" r="5"/><circle class="bf" cx="23" cy="23" r="1.500"/></svg>
    </div>

    <div class="dialog">
      <div class="dlg-head"><span>提示</span><svg class="dlg-x" viewBox="0 0 14 14"><path d="M1 1l12 12M13 1L1 13"/></svg></div>
      <div class="dlg-body"><span class="info"><i></i></span><span>截断后各段的长度必须都大于宽度</span></div>
      <div class="dlg-foot"><span class="dlg-btn">确定</span></div>
    </div>
  </div>

  <div class="gutter"><span></span></div>

  <aside class="panel display">
    <div class="closebar"><svg class="x" viewBox="0 0 10 10"><path d="M1 1l8 8M9 1l-8 8"/></svg></div>
    <div class="ptitle">显示设置</div>
    <div class="disp-tabs"><span class="dt on">图元显示</span><span class="dt">楼层显示</span></div>
    <div class="disp-table">
      <div class="disp-grid">
        <div class="dc dh dname">图层构件</div><div class="dc dh hl">显示图元</div><div class="dc dh">显示名称</div>
        <div class="dc dn">板受力筋</div><div class="dc"><span class="cb"></span></div><div class="dc"><span class="cb"></span></div>
        <div class="dc dn">板负筋</div><div class="dc"><span class="cb"></span></div><div class="dc"><span class="cb"></span></div>
        <div class="dc dn">楼层板带</div><div class="dc"><span class="cb"></span></div><div class="dc"><span class="cb"></span></div>
        <div class="dc dn">板加腋</div><div class="dc"><span class="cb on"></span></div><div class="dc"><span class="cb"></span></div>
        <div class="dc dg"><span class="minus"></span>装配式</div><div class="dc"><span class="cb part"></span></div><div class="dc"><span class="cb"></span></div>
        <div class="dc dn">预制柱</div><div class="dc"><span class="cb on"></span></div><div class="dc"><span class="cb"></span></div>
        <div class="dc dn">预制墙</div><div class="dc"><span class="cb on"></span></div><div class="dc"><span class="cb"></span></div>
        <div class="dc dn">预制梁</div><div class="dc"><span class="cb on"></span></div><div class="dc"><span class="cb"></span></div>
        <div class="dc dn">叠合板(整厚)</div><div class="dc"><span class="cb on"></span></div><div class="dc"><span class="cb"></span></div>
        <div class="dc dn">叠合板(预制底...</div><div class="dc"><span class="cb on"></span></div><div class="dc"><span class="cb"></span></div>
        <div class="dc dn">板缝</div><div class="dc"><span class="cb"></span></div><div class="dc"><span class="cb"></span></div>
        <div class="dc dn">叠合板受力筋</div><div class="dc"><span class="cb"></span></div><div class="dc"><span class="cb"></span></div>
        <div class="dc dn">叠合板负筋</div><div class="dc"><span class="cb"></span></div><div class="dc"><span class="cb"></span></div>
        <div class="dc dg"><span class="minus"></span>空心楼盖</div><div class="dc"><span class="cb part"></span></div><div class="dc"><span class="cb"></span></div>
        <div class="dc dn">空心楼盖板</div><div class="dc"><span class="cb"></span></div><div class="dc"><span class="cb"></span></div>
        <div class="dc dn">空心楼盖柱帽</div><div class="dc"><span class="cb"></span></div><div class="dc"><span class="cb"></span></div>
        <div class="dc dn">主肋梁</div><div class="dc"><span class="cb on"></span></div><div class="dc"><span class="cb"></span></div>
        <div class="dc dn">成孔芯模</div><div class="dc"><span class="cb"></span></div><div class="dc"><span class="cb"></span></div>
        <div class="dc dn">次肋梁</div><div class="dc"><span class="cb"></span></div><div class="dc"><span class="cb"></span></div>
        <div class="dc dn">次肋梁下部筋</div><div class="dc"><span class="cb"></span></div><div class="dc"><span class="cb"></span></div>
        <div class="dc dn">次肋梁支座筋</div><div class="dc"><span class="cb"></span></div><div class="dc"><span class="cb"></span></div>
        <div class="dc dn">空挡</div><div class="dc"><span class="cb"></span></div><div class="dc"><span class="cb"></span></div>
        <div class="dc dn">空心楼盖板受...</div><div class="dc"><span class="cb"></span></div><div class="dc"><span class="cb"></span></div>
        <div class="dc dg"><span class="minus"></span>楼梯</div><div class="dc"><span class="cb"></span></div><div class="dc"><span class="cb"></span></div>
      </div>
      <span class="vbar disp-v"></span>
    </div>
    <div class="disp-foot"><span class="reset">恢复默认设置</span></div>
  </aside>
</main>

<footer class="status">
  <span class="st-coord">X = 578070 Y = 393046</span>
  <span class="st-h">层高：&nbsp;5.8</span>
  <span class="st-e">标高：&nbsp;17.2~23</span>
  <span class="st-z">0</span>
  <span class="st-hide">隐藏：&nbsp;0</span>
  <div class="snap">
    <span class="sb"><svg class="ic-s" viewBox="0 0 20 20"><path class="g" d="M3 2v16h15M8 18v-6h-5"/></svg></span>
    <span class="sb wide on"><svg class="ic-s" viewBox="0 0 20 20"><rect class="g w2" x="3" y="3" width="14" height="14" rx="1"/><circle class="bf" cx="3" cy="3" r="2"/></svg><i class="caret dark"></i></span>
    <span class="sb"><svg class="ic-s" viewBox="0 0 20 20"><path class="d w2" d="M2 2l16 16M18 2L2 18"/></svg></span>
    <span class="sb wide"><svg class="ic-s" viewBox="0 0 20 20"><path class="g" d="M2 17L15 3M2 17h16"/></svg><i class="caret dark"></i></span>
    <span class="sb wide"><svg class="ic-s" viewBox="0 0 20 20"><path class="g" d="M3 2v8M0 6h7"/><rect class="gf" x="7" y="10" width="10" height="6"/><path class="g" d="M2 18h16"/></svg><i class="caret dark"></i></span>
    <span class="sb"><svg class="ic-s" viewBox="0 0 20 20"><rect class="gf" x="5" y="2" width="10" height="14"/><path class="g" d="M2 18h16M15 5h3v10"/></svg></span>
    <span class="sb"><svg class="ic-s" viewBox="0 0 20 20"><path class="g w2" d="M3 18V9l10-6 4 15"/><circle class="bf" cx="3" cy="18" r="1.500"/></svg></span>
  </div>
  <span class="st-msg">按鼠标左键选择打断点或Shift+左键指定打断点,支持多选,按右键确认选择</span>
</footer>
<div class="taskstrip"><span class="strip-box"></span><span class="strip-clock">15:45</span></div>
</body>
</html>
```
FILE: styles.css
```css
* { box-sizing: border-box; }
html, body { margin: 0; height: 1040px; overflow: hidden; }
body { width: 1920px; background: #f0f0f0; font: 15px/1.2 "Noto Sans CJK SC", "Noto Sans", sans-serif; color: #484848; }
.defs { position: absolute; }
.top, .ribbon, .combos, .workspace, .status { filter: blur(.35px); }

/* icon stroke classes */
.g, .b, .d, .bw, .rw, .lb, .lk, .lbw, .gf2, .bw2 { fill: none; stroke-linecap: round; stroke-linejoin: round; }
.g { stroke: #606468; stroke-width: 1.1; }
.b { stroke: #2f86e8; stroke-width: 1.1; }
.d { stroke: #c8c8c8; stroke-width: 1.1; }
.w2 { stroke-width: 1.6; }
.bw { stroke: #2f86e8; stroke-width: 1.5; }
.bw2 { stroke: #2f86e8; stroke-width: 2.4; }
.rw { stroke: #e23b3b; stroke-width: 1.6; }
.dash { stroke-dasharray: 2.5 2; }
.bf { fill: #2f86e8; stroke: none; }
.bfr { fill: #2f86e8; }
.gf { fill: #606468; stroke: none; }
.gf2 { fill: #b8bcc0; stroke: #606468; }
.lb { fill: #cfe3fb; stroke: #2f86e8; stroke-width: 1.2; }
.lbw { fill: #cfe3fb; stroke: #2f86e8; stroke-width: 1.6; }
.lk { fill: #d6e7fb; stroke: #606468; stroke-width: 1.4; }
.ic { width: 20px; height: 20px; flex: none; }
.ic-s { width: 16px; height: 16px; flex: none; }
.ic-m { width: 24px; height: 24px; flex: none; }
.ic-t { width: 22px; height: 22px; }
.ic-lock { width: 19px; height: 19px; }
.caret { display: inline-block; width: 0; height: 0; margin-left: 8px; border: 3.5px solid transparent; border-top: 4.500px solid #8e8e8e; border-bottom: 0; vertical-align: middle; flex: none; }
.caret.dark { border-top-color: #555; }

/* header */
.top { display: flex; height: 51px; background: #fff; position: relative; z-index: 5; }
.logo-cell { width: 69px; position: relative; flex: none; }
.logo { position: absolute; left: 10px; top: 4px; width: 38px; height: 36px; }
.logo-t { fill: url(#logoGrad); }
.logo-corner { position: absolute; left: 49px; top: 46px; border: 3px solid transparent; border-right-color: #777; border-bottom-color: #777; }
.top-main { flex: 1; min-width: 0; display: flex; flex-direction: column; }
.title-row { height: 27px; display: flex; align-items: center; }
.quick { display: flex; align-items: center; gap: 12px; }
.quick-pair { display: flex; align-items: center; }
.quick-pair .caret { margin-left: 5px; margin-right: -3px; }
.app-title { margin-left: 26px; white-space: nowrap; color: #333; font-size: 15.500px; }
.app-path { letter-spacing: -.3px; }
.new-badge { display: inline-block; width: 33px; height: 15px; margin: 0 2px 0 -16px; background: #df2020; color: #fff; font: 12px/15px "Liberation Sans", sans-serif; text-align: center; position: relative; top: 5px; }
.win-ctrl { margin-left: auto; display: flex; align-items: center; gap: 35px; padding-right: 17px; }
.win-min { width: 9px; height: 3px; background: #777; margin-top: 4px; }
.win-ic { width: 12px; height: 12px; }
.tab-row { flex: 1; display: flex; align-items: center; }
.tabs { display: flex; gap: 32px; padding-left: 9px; color: #484848; white-space: nowrap; }
.tabs span { line-height: 24px; }
.tabs .tab-active { background: #1890f5; color: #fff; border-radius: 13px; padding: 0 15px; margin: 0 -14px 0 -16px; width: 62px; text-align: center; }
.search-zone { margin-left: auto; display: flex; align-items: center; }
.search-box { width: 400px; height: 22px; border: 1px solid #eee; border-radius: 3px; padding: 0 8px 0 3px; display: flex; align-items: center; justify-content: space-between; color: #333; background: #fff; }
.avatar { width: 10px; height: 22px; margin-left: 9px; background: #efe8df; }
.user { margin-right: 32px; width: 30px; }
.help { width: 28px; font-size: 20px; display: inline-flex; align-items: center; margin-left: 2px; color: #555; }
.help .caret { margin-left: 2px; }
.search-zone .ic-m + .help + .ic-m { margin-left: 1px; }
.chevron { margin: 0 4px 0 6px; }
.tip-bubble { position: absolute; left: 1073px; top: 16px; width: 243px; height: 42px; background: #0a8bfb; border-radius: 3px; color: #fff; display: flex; align-items: center; gap: 18px; padding-left: 8px; z-index: 5; font-size: 15.500px; }
.tip-bubble::after { content: ""; position: absolute; right: -7px; top: 14px; border: 7px solid transparent; border-left-color: #0a8bfb; border-right: 0; }
.tip-btn { background: #fff; color: #1b8df0; width: 74px; height: 26px; line-height: 26px; text-align: center; border-radius: 2px; white-space: nowrap; }

/* ribbon */
.ribbon { height: 121px; display: flex; background: #fff; border-top: 1px solid #eee; }
.group { display: flex; flex-direction: column; flex: none; border-right: 1px solid #dedede; margin: 2px 0 3px; }
.body { display: flex; flex: 1; }
.glabel { height: 28px; padding-top: 6px; line-height: 22px; text-align: center; color: #555; white-space: nowrap; }
.col { display: flex; flex-direction: column; }
.item { height: 29px; display: flex; align-items: center; gap: 4px; white-space: nowrap; padding-left: 1px; }
.item .caret { margin-left: 6px; }
.off { color: #c8c8c8; }
.item-on { background: #c3dbf3; border-radius: 4px; margin: 2px 0 -2px -3px; height: 25px; width: 65px; padding-left: 3px; }
.g-sel { width: 291px; }
.g-dwg { width: 243px; }
.g-gen { width: 346px; }
.g-mod { width: 296px; }
.g-draw { width: 83px; }
.g-rec { width: 127px; }
.g-smart { width: 97px; }
.g-edit { width: 386px; }
.big-btn { display: flex; flex-direction: column; align-items: center; }
.big-sel { width: 65px; padding-top: 6px; }
.big-sel span { margin-top: 7px; }
.ic-big { width: 30px; height: 36px; }
.g-sel .col:nth-of-type(2) { width: 122px; }
.g-dwg .col:nth-child(1) { width: 100px; margin-left: 9px; }
.g-gen .col:nth-child(1) { width: 84px; margin-left: 9px; }
.g-gen .col:nth-child(2) { width: 138px; }
.g-mod .col:nth-child(1) { width: 68px; margin-left: 9px; }
.g-mod .col:nth-child(2) { width: 66px; }
.g-mod .col:nth-child(3) { width: 79px; }
.g-draw .col:nth-child(1) { width: 43px; margin-left: 5px; }
.g-rec .col:nth-child(1) { width: 88px; margin-left: 1px; }
.g-rec .item { gap: 10px; }
.g-edit .col:nth-child(1) { width: 45px; margin-left: 8px; }
.g-edit .col:nth-child(2) { width: 27px; }
.g-edit .col:nth-child(3) { width: 36px; }
.g-edit .col:nth-child(4) { width: 125px; }
.big-smart { width: 78px; padding-top: 4px; color: #555; }
.ic-smart { width: 40px; height: 46px; }
.big-smart .caret { margin: 10px 0 0; }
.smart-line { stroke: #555; stroke-width: 2.5; fill: none; }
.smart-dot { fill: #fff; stroke: #555; stroke-width: 1.6; }

/* checkboxes */
.cb { display: inline-block; width: 17px; height: 17px; border: 1px solid #8a8a8a; border-radius: 3px; background: #fff; position: relative; flex: none; }
.cb.on { background: #2f80e6; border-color: #2f80e6; }
.cb.on::after { content: ""; position: absolute; left: 5px; top: 2px; width: 5px; height: 9px; border: solid #fff; border-width: 0 2px 2px 0; transform: rotate(40deg); }
.cb.part::after { content: ""; position: absolute; inset: 2px; background: #8fc0fb; border-radius: 1px; }
.cb.big { margin-right: 1px; }

/* combo row */
.combos { height: 35px; display: flex; gap: 3px; padding: 5px 0 4px 3px; background: #f0f0f0; border-top: 2px solid #e4e4e4; }
.combo { width: 124px; background: #fff; border-radius: 3px; padding-left: 3px; display: flex; align-items: center; justify-content: space-between; padding-right: 6px; color: #444; }

/* workspace */
.workspace { height: 783px; display: flex; background: #f0f0f0; padding-top: 1px; }
.panel { background: #fff; border: 1px solid #e2e2e2; position: relative; overflow: hidden; }
.closebar { height: 14px; background: #e6e6e6; position: relative; }
.x { position: absolute; right: 3px; top: 2px; width: 9px; height: 9px; stroke: #999; fill: none; stroke-width: 1.2; }
.ptitle { height: 27px; line-height: 24px; padding-left: 10px; background: #f0f0f0; color: #888; border-bottom: 1px solid #e2e2e2; }
.nav { width: 262px; flex: none; }
.nav-tools { height: 34px; display: flex; align-items: center; gap: 5px; padding-left: 10px; border-bottom: 2px solid #e8e8e8; }
.spark { margin-right: auto; }
.nav-toggle { width: 30px; height: 27px; background: #c6dff8; border-radius: 3px; display: inline-flex; align-items: center; justify-content: center; }
.nav-toggle:last-child { margin-right: 1px; }
.tree { height: 706px; padding-top: 3px; overflow: hidden; position: relative; }
.node, .folder { height: 30px; display: flex; align-items: center; white-space: nowrap; color: #505050; position: relative; }
.node { padding-left: 54px; gap: 7px; }
.folder { padding-left: 13px; gap: 7px; }
.node.sel { background: #c3dbf3; margin: 2px 0 2px 51px; height: 26px; width: 139px; padding-left: 3px; border-radius: 4px; }
.dot::after { content: ""; position: absolute; left: 70px; top: 1px; width: 7px; height: 7px; background: #f00; border-radius: 50%; }
.tri { display: inline-block; height: 0; border-left: 3.500px solid #999; border-top: 4px solid transparent; border-bottom: 4px solid transparent; margin: 0 0 0 2px; width: 0; margin-right: 7px; }
.tri.open { border-left: 4px solid transparent; border-right: 4px solid transparent; border-top: 5px solid #999; border-bottom: 0; margin-right: 4px; margin-left: 0; }
.vbar { position: absolute; width: 10px; background: #cfcfcf; border-radius: 5px; }
.nav-bar { left: 246px; top: 264px; height: 262px; }

.mid { width: 344px; flex: none; display: flex; flex-direction: column; gap: 6px; margin-left: 6px; }
.sheets { height: 252px; flex: none; }
.props { flex: 1; min-height: 0; }
.ptabs { height: 28px; display: flex; background: #f0f0f0; border-bottom: 1px solid #ddd; }
.ptab { width: 81px; text-align: center; line-height: 26px; border-right: 1px solid #ddd; }
.ptab.cur { background: #f5f5f5; color: #222; font-weight: 700; }
.ptab.dim { background: #e6e6e6; color: #777; }
.ptab.dim2 { background: #e2e2e2; color: #8a8a8a; }
.sheet-tools { height: 35px; display: flex; align-items: center; padding-left: 4px; gap: 14px; border-bottom: 1px solid #e8e8e8; white-space: nowrap; }
.sheet-tools span { display: flex; align-items: center; gap: 5px; }
.sheet-tools .caret { margin-left: 6px; }
.sheet-grid { display: grid; grid-template-columns: 213px 44px 68px; grid-template-rows: 31px; grid-auto-rows: 26.200px; height: 159px; overflow: hidden; }
.sh { display: flex; align-items: center; padding-left: 5px; border-bottom: 2px solid #eee; border-right: 2px solid #eee; white-space: nowrap; font-size: 15px; }
.sh.head { justify-content: center; padding: 0; color: #555; }
.hl { background: #7cb8f8 !important; color: #fff !important; }
.sh.ctr { justify-content: center; padding: 0; }
.tl { padding-left: 38px; position: relative; }
.tl::before { content: ""; position: absolute; left: 10px; top: 50%; width: 20px; border-top: 1px solid #ddd; }
.group-row { grid-column: 1 / 4; gap: 6px; padding-left: 3px; border-right: 0; }
.minus { width: 15px; height: 15px; border: 1px solid #888; border-radius: 2px; position: relative; flex: none; }
.minus::after { content: ""; position: absolute; left: 3px; right: 3px; top: 6px; border-top: 1px solid #666; }
.focus { background: #d8e9fd; box-shadow: inset 0 0 0 2px #6f6f6f; border: 0; }
.pick { background: #d8e9fd; }
.sheet-v { left: 328px; top: 127px; height: 18px; }
.hscroll { height: 14px; position: relative; background: #fff; }
.hthumb { position: absolute; left: 17px; top: 0; width: 192px; height: 10px; background: #c8c8c8; border-radius: 6px; }
.arrow-l, .arrow-r { position: absolute; top: 1px; border: 4px solid transparent; }
.arrow-l { left: 5px; border-right: 5px solid #555; border-left: 0; }
.arrow-r { left: 314px; border-left: 5px solid #555; border-right: 0; }

.prop-grid { display: grid; grid-template-columns: 27px 126px 119px 51px; grid-template-rows: 27px; grid-auto-rows: 26.200px; width: 323px; height: 482px; overflow: hidden; }
.pc { display: flex; align-items: center; padding-left: 4px; border-bottom: 2px solid #eee; border-right: 1px solid #e4e4e4; white-space: nowrap; overflow: hidden; }
.num { background: #f2f2f2; justify-content: center; padding: 0; }
.lnk { color: #3a80e2; }
.cc { justify-content: center; padding: 0; }
.phead { color: #555; }
.steel { font-size: 11px; line-height: 1; vertical-align: 5px; }
.prop-v { left: 329px; top: 61px; height: 270px; }

.gutter { width: 5px; flex: none; position: relative; }
.gutter span { position: absolute; left: 0; right: 0; top: 329px; height: 123px; background: #666; }
.canvas { width: 948px; flex: none; position: relative; overflow: hidden; height: 782px; }
.cad { display: block; }
.cad-bg { fill: #666; }
.star { fill: none; stroke: #333; stroke-width: 1; }
.star-fill { fill: url(#stars); }
.orange-fill { fill: #ff8a00; }
.hatch-line { fill: none; stroke: #9a5a10; stroke-width: .8; }
.gr { fill: #2ddc2d; stroke: #1fae70; stroke-width: 1; }
.or { fill: url(#hatch); }
.mg { stroke: #ff2fe0; stroke-width: 1; fill: none; }
.teal { fill: #2d9cb8; }
.blue { fill: #0b66ff; }
.blue-edge { stroke: #7bb0ff; stroke-width: 1.500; stroke-dasharray: 10 3; fill: none; }
.dr { stroke: #a50000; stroke-width: 1; fill: none; }
.dk { stroke: #2a3a20; stroke-width: 1; fill: none; }
.ye { stroke: #f7f000; stroke-width: 1; fill: none; }
.ye-dash { stroke: #e8f47a; stroke-width: 1.200; stroke-dasharray: 8 5; fill: none; }
.ye-fill { fill: #ffff00; }
.pu { fill: #8800ff; stroke: #e8d800; stroke-width: 1.200; }
.cw { stroke: #e8e8c8; stroke-width: 1.300; fill: none; }
.rd { stroke: #ff0000; stroke-width: 2; fill: none; }
.rd2 { stroke: #ff0000; stroke-width: 1.800; fill: none; }
.rdthin { stroke: #e01818; stroke-width: 1.200; fill: none; }
.blue-thin { stroke: #1a6ae0; stroke-width: 1.200; fill: none; }
.cy-dash { stroke: #2aa; stroke-dasharray: 4 3; fill: none; }
.wh { stroke: #fff; stroke-width: 1.700; fill: none; }
.ax { fill: none; stroke: #1b7d1b; stroke-width: 1; }
.lbc { fill: none; stroke: #16d016; stroke-width: 1; }
.mgc { fill: rgba(109,58,94,.6); stroke: #d02fb0; stroke-width: 1; }
.t-ax { fill: #fff; font: 20px "Liberation Sans", sans-serif; text-anchor: middle; }
.t-lb { fill: #16d016; font: 14px "Liberation Sans", sans-serif; text-anchor: middle; }
.t-cy text { fill: #19d9e6; font: 15px "Liberation Sans", sans-serif; }
.t-blue { fill: #1428d8; font: 15px "Liberation Sans", sans-serif; }
.t-gr text, .t-gr { fill: #b5b5b5; font: 13px "Liberation Sans", sans-serif; }
.t-rose { fill: #d07a90; }
.t-wh text { fill: #fff; font: 19px "Liberation Sans", sans-serif; }
.t-wh .t-sm { font-size: 15px; }
.t-wh .t-md { font-size: 17px; }
.ucs-g { stroke: #2cdc2c; stroke-width: 3; fill: none; }
.ucs-r { stroke: #f00; stroke-width: 4; fill: #f00; }
.ucs-b { fill: #1820c0; }
.t-x { fill: #f00; font: 18px "Liberation Sans", sans-serif; }

.side-tools { position: absolute; right: 0; top: 1px; width: 41px; height: 307px; background: #fff; display: flex; flex-direction: column; align-items: center; padding-top: 10px; gap: 10px; }
.st { width: 28px; height: 28px; flex: none; }
.side-caret { margin: -3px 0; }
.side-sep { width: 30px; border-top: 1px solid #555; margin-bottom: -4px; }

.dialog { position: absolute; left: 109px; top: 205px; width: 450px; height: 182px; background: rgba(240,241,240,.97); border: 1px solid #dcdcdc; display: flex; flex-direction: column; box-shadow: 0 0 3px rgba(0,0,0,.25); }
.dlg-head { height: 46px; padding: 0 17px 0 20px; display: flex; align-items: center; justify-content: space-between; color: #444; font-size: 16px; }
.dlg-x { width: 14px; height: 14px; stroke: #777; stroke-width: 1.100; fill: none; }
.dlg-body { height: 64px; display: flex; align-items: center; gap: 14px; padding-left: 31px; color: #444; font-size: 17.500px; white-space: nowrap; margin-top: -1px; }
.info { width: 35px; height: 35px; border-radius: 50%; background: #2a7fd8; position: relative; flex: none; }
.info i { position: absolute; left: 16px; top: 13px; width: 3px; height: 15px; background: #fff; border-radius: 1px; }
.info::before { content: ""; position: absolute; left: 15.500px; top: 7px; width: 4px; height: 4px; background: #fff; border-radius: 50%; }
.dlg-foot { flex: 1; display: flex; justify-content: flex-end; align-items: flex-start; padding: 27px 14px 0 0; }
.dlg-btn { width: 97px; height: 33px; line-height: 33px; text-align: center; background: #2c82e0; color: #fff; border-radius: 3px; }

/* right panel */
.display { width: 350px; flex: none; }
.disp-tabs { height: 34px; display: flex; gap: 5px; padding: 5px 0 0 4px; }
.dt { width: 75px; height: 29px; line-height: 26px; text-align: center; background: #e0e0e0; border-radius: 3px 3px 0 0; color: #666; }
.dt.on { background: #fff; border: 1px solid #ddd; border-bottom: 0; color: #3a88ee; width: 76px; }
.disp-table { margin: 0 3px; height: 659px; border: 1px solid #e2e2e2; position: relative; padding-top: 3px; overflow: hidden; }
.disp-grid { display: grid; grid-template-columns: 164px 79px 78px; grid-template-rows: 26px; grid-auto-rows: 26.200px; width: 321px; }
.dc { display: flex; align-items: center; justify-content: center; border-bottom: 2px solid #ececec; border-right: 1px solid #e4e4e4; white-space: nowrap; }
.dh { color: #555; }
.dname { justify-content: flex-start; padding-left: 53px; }
.dn { justify-content: flex-start; padding-left: 52px; position: relative; }
.dn::before { content: ""; position: absolute; left: 22px; top: 50%; width: 20px; border-top: 1px solid #ddd; }
.dn::after { content: ""; position: absolute; left: 22px; top: 0; bottom: 0; border-left: 1px solid #ddd; }
.dg { justify-content: flex-start; padding-left: 15px; gap: 7px; }
.disp-v { left: 326px; top: 240px; height: 109px; }
.disp-foot { height: 48px; display: flex; justify-content: flex-end; align-items: center; padding: 0 10px 0 0; }
.reset { width: 112px; height: 33px; line-height: 31px; text-align: center; border: 1px solid #ddd; border-radius: 3px; background: #fff; }

/* status */
.status { height: 40px; background: #fbfbfb; position: relative; display: flex; align-items: center; white-space: nowrap; color: #505050; }
.st-coord { margin-left: 3px; width: 329px; word-spacing: 4px; }
.st-h { width: 104px; }
.st-e { width: 166px; }
.st-z { width: 129px; }
.st-hide { width: 127px; }
.snap { display: flex; gap: 5px; width: 297px; }
.sb { width: 30px; height: 30px; border: 1px solid #aaa; border-radius: 3px; display: flex; align-items: center; justify-content: center; background: #fff; }
.sb.wide { width: 44px; }
.sb.wide .caret { margin-left: 3px; }
.sb.on { background: #d6e7fb; border-color: #2f86e8; }
.taskstrip { height: 10px; background: linear-gradient(90deg, #f3ece6, #f8ece3 40%, #eeeee8); position: relative; overflow: hidden; }
.strip-box { position: absolute; left: 60px; width: 429px; top: 0; height: 10px; background: #fff; border: 1px solid #ccc; border-bottom: 0; }
.strip-clock { position: absolute; left: 1787px; top: 5px; font-size: 14px; color: #333; }
```
